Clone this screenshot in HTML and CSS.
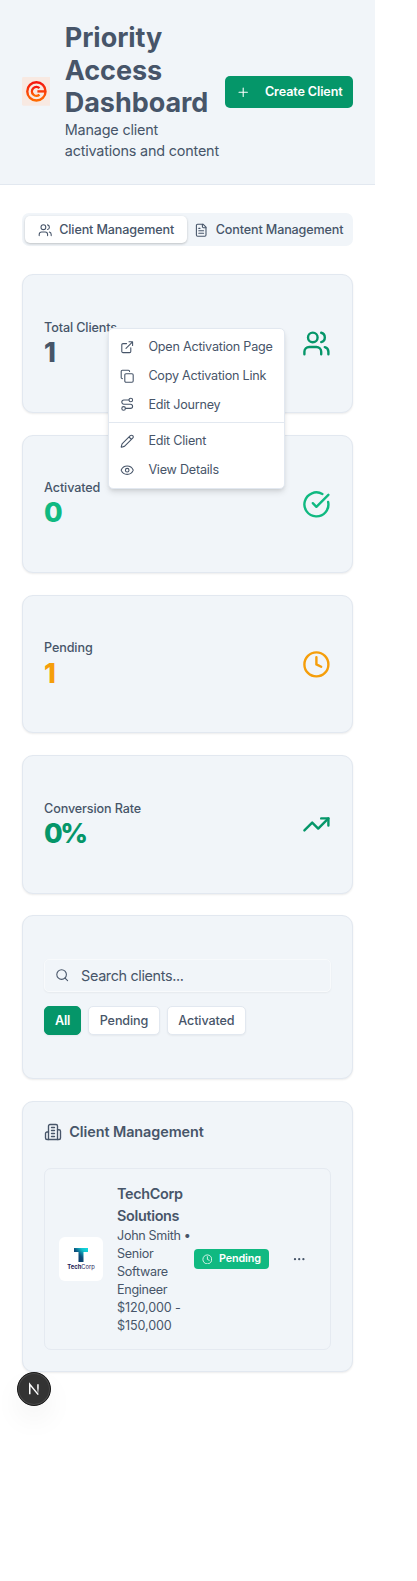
FILE: index.html
```html
<!DOCTYPE html>
<html lang="en">
<head>
<meta charset="utf-8">
<title>Priority Access Dashboard</title>
<link rel="stylesheet" href="styles.css">
</head>
<body>
<svg class="defs" width="0" height="0" aria-hidden="true">
  <defs>
    <linearGradient id="sun" x1="0" y1="0" x2="0" y2="1"><stop offset="0" stop-color="#f5150f"/><stop offset="1" stop-color="#ff6a00"/></linearGradient>
    <linearGradient id="teal" x1="0" y1="1" x2="1" y2="0"><stop offset="0" stop-color="#0b2a5c"/><stop offset=".45" stop-color="#0d4f7c"/><stop offset=".75" stop-color="#10c4cf"/><stop offset="1" stop-color="#12dce0"/></linearGradient>
    <linearGradient id="fade" x1="0" y1="0" x2="0" y2="1"><stop offset=".4" stop-color="#fff"/><stop offset="1" stop-color="#fff" stop-opacity="0.1"/></linearGradient>
    <symbol id="users" viewBox="0 0 24 24"><path d="M16 21v-2a4 4 0 0 0-4-4H6a4 4 0 0 0-4 4v2"/><circle cx="9" cy="7" r="4"/><path d="M22 21v-2a4 4 0 0 0-3-3.87"/><path d="M16 3.13a4 4 0 0 1 0 7.75"/></symbol>
    <symbol id="clock" viewBox="0 0 24 24"><circle cx="12" cy="12" r="10"/><path d="M12 6v6l4 2"/></symbol>
  </defs>
</svg>
<div class="page">
  <header class="header">
    <div class="brand">
      <svg class="logo" viewBox="0 0 29 29"><rect width="29" height="29" rx="1.5" fill="#f8e9e2"/><g fill="none" stroke="url(#sun)" stroke-width="2.4"><circle cx="14.5" cy="14.5" r="9.2"/><path d="M17.6 11.2A4.500 4.500 0 1 0 17.600 17.800"/></g><path d="M15.500 13.300h8.500v2.400h-8.500z" fill="#fa3a08"/></svg>
      <div class="heading">
        <h1>Priority<br>Access<br>Dashboard</h1>
        <p>Manage client<br>activations and content</p>
      </div>
    </div>
    <button class="create"><svg class="icon" viewBox="0 0 24 24"><path d="M5 12h14M12 5v14"/></svg><span>Create Client</span></button>
  </header>
  <main class="main">
    <nav class="tabs">
      <a class="tab tab-active"><svg class="icon"><use href="#users"/></svg><span>Client Management</span></a>
      <a class="tab"><svg class="icon" viewBox="0 0 24 24"><path d="M15 2H6a2 2 0 0 0-2 2v16a2 2 0 0 0 2 2h12a2 2 0 0 0 2-2V7Z"/><path d="M14 2v4a2 2 0 0 0 2 2h4M10 9H8M16 13H8M16 17H8"/></svg><span>Content Management</span></a>
    </nav>
    <div class="cards">
      <section class="card stat"><div class="figures"><p class="label">Total Clients</p><p class="value">1</p></div><svg class="icon big green"><use href="#users"/></svg></section>
      <section class="card stat"><div class="figures"><p class="label">Activated</p><p class="value emerald">0</p></div><svg class="icon big emerald" viewBox="0 0 24 24"><path d="M21.801 10A10 10 0 1 1 17 3.335"/><path d="m9 11 3 3L22 4"/></svg></section>
      <section class="card stat"><div class="figures"><p class="label">Pending</p><p class="value amber">1</p></div><svg class="icon big amber"><use href="#clock"/></svg></section>
      <section class="card stat"><div class="figures"><p class="label">Conversion Rate</p><p class="value green">0%</p></div><svg class="icon big green" viewBox="0 0 24 24"><path d="M22 7l-8.5 8.5-5-5L2 17"/><path d="M16 7h6v6"/></svg></section>
      <section class="card filters">
        <div class="search"><svg class="icon" viewBox="0 0 24 24"><circle cx="11" cy="11" r="8"/><path d="m21 21-4.3-4.3"/></svg><span>Search clients...</span></div>
        <div class="chips"><button class="chip chip-on">All</button><button class="chip">Pending</button><button class="chip">Activated</button></div>
      </section>
      <section class="card clients">
        <h2><svg class="icon" viewBox="0 0 24 24"><path d="M6 22V4a2 2 0 0 1 2-2h8a2 2 0 0 1 2 2v18Z"/><path d="M6 12H4a2 2 0 0 0-2 2v6a2 2 0 0 0 2 2h2M18 9h2a2 2 0 0 1 2 2v9a2 2 0 0 1-2 2h-2M10 6h4M10 10h4M10 14h4M10 18h4"/></svg><span>Client Management</span></h2>
        <div class="client">
          <div class="avatar"><svg class="mark" viewBox="0 0 14 14"><path d="M0 0h14v4H9.500v10h-5V4H0z" fill="url(#teal)"/></svg><span class="mark-name"><b>Tech</b>Corp</span></div>
          <div class="who"><h3>TechCorp<br>Solutions</h3><p>John Smith •<br>Senior<br>Software<br>Engineer</p><p class="pay">$120,000 -<br>$150,000</p></div>
          <span class="badge"><svg class="icon"><use href="#clock"/></svg><span>Pending</span></span>
          <button class="more"><svg class="icon" viewBox="0 0 24 24"><circle cx="12" cy="12" r="1"/><circle cx="19" cy="12" r="1"/><circle cx="5" cy="12" r="1"/></svg></button>
        </div>
      </section>
    </div>
  </main>
  <div class="menu">
    <a class="item"><svg class="icon" viewBox="0 0 24 24"><path d="M15 3h6v6M10 14 21 3M18 13v6a2 2 0 0 1-2 2H5a2 2 0 0 1-2-2V8a2 2 0 0 1 2-2h6"/></svg><span>Open Activation Page</span></a>
    <a class="item"><svg class="icon" viewBox="0 0 24 24"><rect x="8" y="8" width="14" height="14" rx="2"/><path d="M4 16c-1.1 0-2-.9-2-2V4c0-1.1.9-2 2-2h10c1.1 0 2 .9 2 2"/></svg><span>Copy Activation Link</span></a>
    <a class="item"><svg class="icon" viewBox="0 0 24 24"><circle cx="6" cy="19" r="3"/><path d="M9 19h8.5a3.5 3.5 0 0 0 0-7h-11a3.500 3.500 0 0 1 0-7H15"/><circle cx="18" cy="5" r="3"/></svg><span>Edit Journey</span></a>
    <hr class="rule">
    <a class="item"><svg class="icon" viewBox="0 0 24 24"><path d="M21.174 6.812a1 1 0 0 0-3.986-3.987L3.842 16.174a2 2 0 0 0-.5.83l-1.321 4.352a.5.5 0 0 0 .623.622l4.353-1.32a2 2 0 0 0 .83-.497zM15 5l4 4"/></svg><span>Edit Client</span></a>
    <a class="item"><svg class="icon" viewBox="0 0 24 24"><path d="M2.062 12.348a1 1 0 0 1 0-.696 10.750 10.750 0 0 1 19.876 0 1 1 0 0 1 0 .696 10.750 10.750 0 0 1-19.876 0"/><circle cx="12" cy="12" r="3"/></svg><span>View Details</span></a>
  </div>
  <div class="devtool"><svg viewBox="0 0 34 34"><path d="M12.500 22.500V12L21.500 23" fill="none" stroke="#fff" stroke-width="1.600"/><path d="M20.400 12h1.600v10h-1.600z" fill="url(#fade)"/></svg></div>
</div>
</body>
</html>
```
FILE: styles.css
```css
* { box-sizing: border-box; margin: 0; padding: 0; }
body { background: #fff; color: #475569; font: 12.6px/18px Inter, "Liberation Sans", sans-serif; letter-spacing: -0.12px; }
.defs { position: absolute; }
.page { position: relative; width: 375px; min-height: 1581px; }
.icon { width: 14.4px; height: 14.4px; flex: none; fill: none; stroke: currentColor; stroke-width: 1.8; stroke-linecap: round; stroke-linejoin: round; }
button { font: inherit; letter-spacing: inherit; color: inherit; border: 0; }
span, p, h1, h2, h3, button { white-space: nowrap; }

.header { display: flex; align-items: center; justify-content: space-between; height: 184.5px; padding: 0 21.6px; background: #f1f5f9; border-bottom: 1px solid #e2e8f0; }
.brand { display: flex; align-items: center; gap: 14.4px; }
.logo { width: 28.8px; height: 28.8px; }
.heading { width: 154px; }
h1 { padding-top: 0.6px; margin-bottom: -0.6px; font-size: 27px; line-height: 32.4px; font-weight: 700; letter-spacing: -0.05px; }
.heading p { font-size: 14.4px; line-height: 21.6px; letter-spacing: -0.19px; }
.create { display: flex; align-items: center; gap: 14.4px; height: 32.4px; padding: 0 10.8px; border-radius: 5px; background: #059669; color: #fff; font-weight: 600; }

.main { padding: 28.8px 21.6px; }
.tabs { display: flex; height: 32.4px; padding: 3px; border-radius: 7px; background: #f1f5f9; }
.tab { display: flex; align-items: center; gap: 7.2px; padding: 1px 7px 0; font-weight: 550; letter-spacing: -0.14px; }
.tab-active { width: 163px; justify-content: center; padding: 1px 0 0; border-radius: 5px; background: #fff; box-shadow: 0 1px 3px rgba(0,0,0,.14), 0 1px 2px rgba(0,0,0,.08); }

.cards { display: flex; flex-direction: column; gap: 21.6px; margin-top: 28.8px; }
.card { border: 1px solid #e2e8f0; border-radius: 11px; background: #f1f5f9; box-shadow: 0 1px 2px rgba(0,0,0,.08); padding: 43.1px 21.5px; }
.stat { display: flex; align-items: center; justify-content: space-between; height: 138.6px; }
.figures { padding-top: 1.2px; }
.label { font-weight: 500; }
.value { padding-top: 0.2px; font-size: 27px; line-height: 32.4px; font-weight: 800; letter-spacing: -2.6px; }
.big { width: 28.8px; height: 28.8px; stroke-width: 2; }
.green { color: #059669; }
.emerald { color: #10b981; }
.amber { color: #f59e0b; }

.filters { height: 163.8px; }
.search { display: flex; align-items: center; gap: 11.6px; height: 32.4px; padding: 0 10px; border: 1px solid #f8fafc; border-radius: 5px; box-shadow: 0 1px 2px rgba(0,0,0,.05); font-size: 14.4px; letter-spacing: -0.35px; }
.chips { display: flex; gap: 7.2px; margin-top: 14.4px; }
.chip { height: 28.8px; padding: 0 10.5px; border: 1px solid #e2e8f0; border-radius: 5px; background: #fff; font-weight: 500; letter-spacing: -0.13px; box-shadow: 0 1px 2px rgba(0,0,0,.05); }
.chip-on { padding: 0 9.8px; background: #059669; border-color: #059669; color: #fff; font-weight: 600; }

.clients { height: 271.8px; padding: 21.5px; }
h2 { display: flex; align-items: center; gap: 7.2px; height: 18px; margin-bottom: 27px; font-size: 14.4px; font-weight: 600; letter-spacing: -0.07px; }
h2 .icon { width: 18px; height: 18px; }
.client { display: flex; align-items: center; height: 181.8px; padding: 0 14.4px; border: 1px solid #e5eaf1; border-radius: 7px; }
.avatar { display: flex; flex-direction: column; align-items: center; width: 43.2px; height: 43.2px; padding-top: 11px; border-radius: 6px; background: #fff; }
.mark { width: 14px; height: 14px; }
.mark-name { margin-top: 1px; color: #1d1a55; font-size: 5.8px; line-height: 8px; letter-spacing: 0; }
.who { width: 62.4px; margin: 0 14.4px; letter-spacing: -0.33px; }
.pay { letter-spacing: -0.14px; }
h3 { font-size: 14.4px; line-height: 21.6px; font-weight: 600; }
.badge { display: flex; align-items: center; gap: 6.5px; height: 20px; padding: 0 7.8px; border-radius: 4px; background: #10b981; color: #fff; font-size: 10.8px; font-weight: 600; }
.badge .icon { width: 10.8px; height: 10.8px; }
.more { display: flex; align-items: center; justify-content: center; width: 33px; height: 28.8px; margin-left: auto; background: none; }

.menu { position: absolute; left: 108px; top: 328px; width: 176.5px; padding: 3.6px 0; border: 1px solid #e2e8f0; border-radius: 5px; background: #fff; box-shadow: 0 4px 6px -1px rgba(0,0,0,.12), 0 2px 4px -2px rgba(0,0,0,.12); letter-spacing: -0.22px; }
.item { display: flex; align-items: center; gap: 14.2px; height: 28.8px; padding-left: 10.8px; }
.rule { height: 1px; margin: 3.4px 0; border: 0; background: #e2e8f0; }

.devtool { position: absolute; left: 17px; top: 1371.5px; width: 34px; height: 34px; border-radius: 50%; background: #333; border: 1px solid #171717; box-shadow: inset 0 0 0 1px #4a4a4a, 0 14px 28px rgba(0,0,0,.05); }
.devtool svg { display: block; width: 32px; height: 32px; }
```
